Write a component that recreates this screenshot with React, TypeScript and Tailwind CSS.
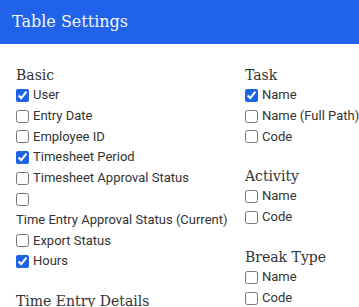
const Check = ({ label, checked = false }: { label: string; checked?: boolean }) => (
  <label className="flex flex-wrap items-center leading-[20.8px]">
    <span className="h-[20.8px] flex items-center">
      <input type="checkbox" defaultChecked={checked} className="w-[13px] h-[13px] mr-1 accent-[#1d63e6]" />
    </span>
    <span className="whitespace-nowrap">{label}</span>
  </label>
);

const Section = ({ title, items }: { title: string; items: [string, boolean][] }) => (
  <div className="mb-[19px]">
    <h3 className="font-['DejaVu_Serif',serif] text-[14px] leading-[20px] text-[#333]">{title}</h3>
    {items.map(([label, checked]) => (
      <Check key={label} label={label} checked={checked} />
    ))}
  </div>
);

export default function App() {
  return (
    <div className="w-[359px] h-[307px] overflow-hidden bg-white font-['Roboto',sans-serif] text-[13px] text-[#333]">
      <div className="h-[44px] bg-[#2162eb] flex items-center px-3">
        <h2 className="font-['DejaVu_Serif',serif] text-[16px] text-[#f7f7f7]">Table Settings</h2>
      </div>
      <div className="flex px-4 pt-[21px]">
        <div className="w-[215px] shrink-0">
          <Section
            title="Basic"
            items={[
              ["User", true],
              ["Entry Date", false],
              ["Employee ID", false],
              ["Timesheet Period", true],
              ["Timesheet Approval Status", false],
              ["Time Entry Approval Status (Current)", false],
              ["Export Status", false],
              ["Hours", true],
            ]}
          />
          <Section title="Time Entry Details" items={[]} />
        </div>
        <div className="ml-[14px] w-[140px] shrink-0">
          <Section
            title="Task"
            items={[
              ["Name", true],
              ["Name (Full Path)", false],
              ["Code", false],
            ]}
          />
          <Section
            title="Activity"
            items={[
              ["Name", false],
              ["Code", false],
            ]}
          />
          <Section
            title="Break Type"
            items={[
              ["Name", false],
              ["Code", false],
            ]}
          />
        </div>
      </div>
    </div>
  );
}
